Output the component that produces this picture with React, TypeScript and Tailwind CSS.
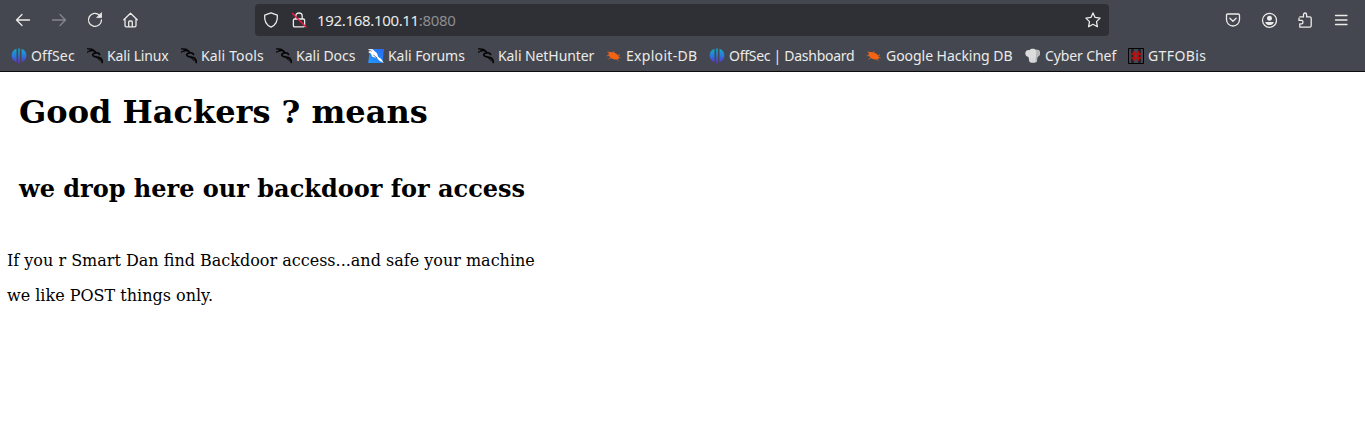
import React from "react";

function OffSecIcon() {
  return (
    <svg width="16" height="16" viewBox="0 0 16 16">
      <defs>
        <linearGradient id="offsec" gradientUnits="userSpaceOnUse" x1="0" y1="0" x2="0" y2="16">
          <stop offset="0" stopColor="#0fb0cc" />
          <stop offset="0.5" stopColor="#2a78d8" />
          <stop offset="1" stopColor="#6a22d0" />
        </linearGradient>
      </defs>
      <g fill="url(#offsec)">
        <path d="M5.500.8v13.400C2.400 13.200.6 10.800.6 7.600S2.400 1.800 5.500.8z" />
        <path d="M10.500.8v13.400c3.100-1 4.900-3.400 4.900-6.600S13.600 1.800 10.500.8z" />
        <path d="M7.200.5h1.600v15H7.200z" />
      </g>
    </svg>
  );
}

function KaliIcon() {
  return (
    <svg width="16" height="16" viewBox="0 0 16 16" fill="none" stroke="#050506">
      <path d="M0 .9C2.500.8 5 .9 6.500 1.800M0 4.500C1.300 3.300 3 2.800 4.800 3" strokeWidth="1.100" />
      <path d="M2.500 2.300C5.500 1.600 7.800 2.800 8.800 4.600l2.700.6 1.500 1.600" strokeWidth="1.700" />
      <path d="M9.200 5C6.200 4.800 5.200 6.300 6.200 7.800c1.300 1.800 5.300 1 7.300 2.500 1.300 1 1.900 2.600 2 5" strokeWidth="1.700" />
      <path d="M10.500 10c.4 1.400 2.200 1.500 3.500 3.400" strokeWidth="1" />
    </svg>
  );
}

function ForumIcon() {
  return (
    <svg width="16" height="16" viewBox="0 0 16 16">
      <defs>
        <linearGradient id="forum" x1="1" y1="0" x2="0" y2="1">
          <stop offset="0" stopColor="#2869ee" />
          <stop offset="1" stopColor="#229aff" />
        </linearGradient>
      </defs>
      <path d="M2 1h14l-1.500 14H.2z" fill="url(#forum)" />
      <path d="M0 1 4.500 1.200l4.500 4 1.200 3.500 3 2.200 2.600 4.100-4.300-2.300-2.700-2.700-4.500-1.300-1.500-3.200L0 4l1.800-.8z" fill="#fff" />
      <path d="m.5 1.800 3.200 1.500M5.300 7l3.800 3" stroke="#444950" strokeWidth=".7" />
    </svg>
  );
}

function ExploitIcon() {
  return (
    <svg width="16" height="16" viewBox="0 0 16 16">
      <path d="M3 4.200C5.500 3.400 9.700 4.500 11.800 7c1.400 1.700 1.500 3.300.5 4.100-2.100 1-5.800.2-8-1.700C2.600 7.800 2 5.500 3 4.200z" fill="#f26411" />
      <path d="M4 4.500 1.500 4M3 7.500.8 7.800M5 9.500l-2.500 1.700M8 4.700l-.5-1.500M11.500 7.500l2.500-.6M12 9.500l2.500.3M10.500 11l2 1.800" stroke="#d86428" strokeWidth=".9" fill="none" />
    </svg>
  );
}

function ChefIcon() {
  return (
    <svg width="16" height="16" viewBox="0 0 16 16">
      <path d="M3.500 9C1 8.500-.2 6.500.5 4.300 1.200 2.300 3 1.600 4.500 2.200 5.500.5 9.500.3 11 2c2-.6 4 .8 4 3 0 2-1 3.300-2.700 3.900l-.4 4.700c-1.500 1.700-6.300 1.600-7.500.2z" fill="#dcdcdc" />
      <path d="M10.500 1.600c1.200 3 0 8-.2 12.700.8-.1 1.200-.3 1.600-.7l.4-4.700C14 8.300 15 7 15 5c0-2.200-2-3.600-4-3z" fill="#bababa" />
      <path d="M5.500 9.500v4M8 10v4" stroke="#c4c4c4" strokeWidth=".5" />
    </svg>
  );
}

function GtfoIcon() {
  return (
    <svg width="16" height="16" viewBox="0 0 16 16">
      <path d="M.5.500h15v15H.5z" fill="none" stroke="#000" />
      <path d="M3 1h3v14H3zM10 1h3v14h-3z" fill="#24262b" />
      <path d="M6 3v10M10 3v10M3 6h10M3 10h10" stroke="#cc0808" strokeWidth="1.500" />
    </svg>
  );
}

const bookmarks = [
  { label: "OffSec", icon: <OffSecIcon />, box: "w-[76px]", text: "tracking-[0.15px]" },
  { label: "Kali Linux", icon: <KaliIcon />, box: "w-[94px]", text: "tracking-[-0.15px]" },
  { label: "Kali Tools", icon: <KaliIcon />, box: "w-[95px]", text: "tracking-[0.15px]" },
  { label: "Kali Docs", icon: <KaliIcon />, box: "w-[92px]", text: "" },
  { label: "Kali Forums", icon: <ForumIcon />, box: "w-[110px]", text: "tracking-[-0.05px]" },
  { label: "Kali NetHunter", icon: <KaliIcon />, box: "w-[128px]", text: "tracking-[-0.08px]" },
  { label: "Exploit-DB", icon: <ExploitIcon />, box: "w-[103px]", text: "tracking-[0.3px]" },
  { label: "OffSec | Dashboard", icon: <OffSecIcon />, box: "w-[157px]", text: "tracking-[-0.28px]" },
  { label: "Google Hacking DB", icon: <ExploitIcon />, box: "w-[159px]", text: "tracking-[-0.04px]" },
  { label: "Cyber Chef", icon: <ChefIcon />, box: "w-[103px]", text: "tracking-[-0.1px]" },
  { label: "GTFOBis", icon: <GtfoIcon />, box: "w-[100px]", text: "tracking-[0.4px]" },
];

function ToolIcon({ children, className = "" }: { children: React.ReactNode; className?: string }) {
  return (
    <svg
      width="16"
      height="16"
      viewBox="0 0 16 16"
      fill="none"
      stroke="currentColor"
      strokeWidth="1.300"
      strokeLinecap="round"
      strokeLinejoin="round"
      className={`shrink-0 ${className}`}
    >
      {children}
    </svg>
  );
}

export default function App() {
  return (
    <div className="flex h-[439px] w-full flex-col overflow-hidden bg-white">
      <header className="flex h-[72px] shrink-0 flex-col border-b border-[#0c0c0d] bg-[#44474f] font-['Noto_Sans','Open_Sans',sans-serif] text-[#ebebe9]">
        <div className="flex h-10 items-center pl-[15px] pr-4">
          <div className="flex w-60 gap-5">
            <ToolIcon><path d="M14.500 8H1.500M7 2.500 1.500 8 7 13.500" /></ToolIcon>
            <ToolIcon className="text-[#84868b]"><path d="M1.500 8h13M9 2.500 14.500 8 9 13.500" /></ToolIcon>
            <ToolIcon>
              <path d="M12.500 3.200A6.500 6.500 0 1 0 14.500 8" />
              <path d="M14.500 1v4.600H10z" fill="currentColor" strokeWidth=".8" />
            </ToolIcon>
            <ToolIcon>
              <path d="M.8 7.700 7.500 1.200l6.700 6.500M2 7.200v6.300q0 1.300 1.300 1.300h8.400q1.300 0 1.300-1.300V7.200M5.700 14.500V10q0-1 1-1h1.600q1 0 1 1v4.500" />
            </ToolIcon>
          </div>
          <div className="flex h-8 w-[854px] items-center rounded bg-[#2e3035] px-2">
            <ToolIcon><path d="M8 .9 14.300 3.100c.5 5-1 9.700-6.300 12C2.700 12.800 1.200 8.100 1.700 3.100z" /></ToolIcon>
            <ToolIcon className="ml-3">
              <path d="M4.800 7V4.100C4.800 2.200 6 1 8 1s3.200 1.200 3.200 3.100V7M3.600 7h8.800q1.200 0 1.200 1.200v5.300q0 1.300-1.200 1.300H3.600q-1.200 0-1.200-1.300V8.200Q2.400 7 3.600 7z" />
              <path d="m1.500 1.500 13.500 13.500" stroke="#f01845" strokeWidth="1.400" />
            </ToolIcon>
            <div className="ml-[10px] whitespace-nowrap text-[15px] leading-5 tracking-[-0.33px]">
              192.168.100.11<span className="text-[#8c8d91]">:8080</span>
            </div>
            <ToolIcon className="ml-auto">
              <path d="m8 .9 2.100 4.500 5 .7-3.600 3.500.9 5.100L8 12.300l-4.400 2.400.9-5.100L.9 6.100l5-.7z" />
            </ToolIcon>
          </div>
          <div className="ml-auto flex gap-5">
            <ToolIcon><path d="M2.800 2h10.400q1.300 0 1.300 1.300V7.500a6.500 6.500 0 0 1-13 0V3.300Q1.500 2 2.800 2zM4.900 6.200 8 9.200l3.100-3" /></ToolIcon>
            <ToolIcon>
              <circle cx="8.500" cy="8.300" r="7" />
              <circle cx="8.500" cy="6.200" r="2.500" fill="currentColor" stroke="none" />
              <path d="M4.200 9.900h8.600c-.5 1.900-2 3.100-4.300 3.100S4.700 11.800 4.200 9.900z" fill="currentColor" stroke="none" />
            </ToolIcon>
            <ToolIcon>
              <path d="M2.800 4.900h3.700V2.700c0-2.300 3.100-2.300 3.100 0v2.200h3.200q1.400 0 1.400 1.300v7.600q0 1.300-1.400 1.300h-10v-3.200h1.800c1.800 0 1.800-3.500 0-3.500H2V6.200" />
            </ToolIcon>
            <ToolIcon><path d="M2.500 3.500h11.500M2.500 8h11.500M2.500 12.500h11.500" /></ToolIcon>
          </div>
        </div>
        <nav className="flex h-[31px] items-center pl-[11px]">
          {bookmarks.map(({ label, icon, box, text }) => (
            <div key={label} className={`flex shrink-0 items-center gap-1 ${box}`}>
              {icon}
              <span className={`whitespace-nowrap text-[14px] leading-5 ${text}`}>{label}</span>
            </div>
          ))}
        </nav>
      </header>
      <main className="flex flex-col items-start whitespace-nowrap pl-[7px] font-['DejaVu_Serif',serif] text-black">
        <h1 className="mt-[21px] pl-3 text-[32px] font-bold leading-[38px]">Good Hackers ? means</h1>
        <h2 className="mt-11 pl-3 text-[24px] font-bold leading-[28px]">we drop here our backdoor for access</h2>
        <p className="mt-12 text-[16px] leading-[19px]">If you r Smart Dan find Backdoor access...and safe your machine</p>
        <p className="mt-4 text-[16px] leading-[19px]">we like POST things only.</p>
      </main>
    </div>
  );
}
